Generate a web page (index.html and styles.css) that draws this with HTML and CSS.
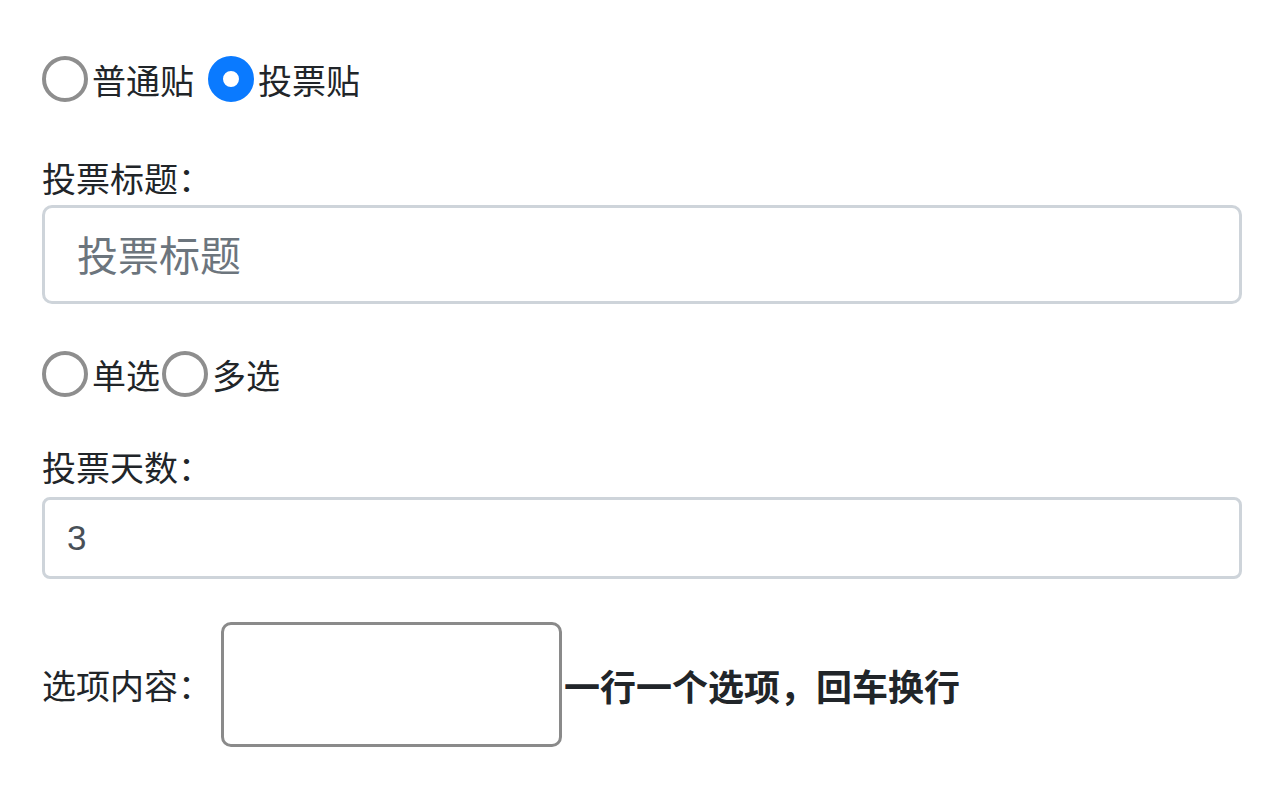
FILE: index.html
```html
<!DOCTYPE html>
<html lang="zh-CN">
<head>
    <meta charset="UTF-8">
    <meta name="viewport" content="width=device-width, initial-scale=1.0">
    <title>发帖</title>
    <link rel="stylesheet" href="styles.css">
</head>
<body>

<form class="post-form">
    <!-- 帖子类型 -->
    <div class="radio-row type-row">
        <label class="radio"><input type="radio" name="type" value="normal">普通贴</label>
        <label class="radio"><input type="radio" name="type" value="vote" checked>投票贴</label>
    </div>

    <!-- 投票标题 -->
    <label class="field-label" for="voteTitle">投票标题：</label>
    <input class="text-input input-lg" type="text" id="voteTitle" placeholder="投票标题">

    <!-- 单选 / 多选 -->
    <div class="radio-row mode-row">
        <label class="radio tight"><input type="radio" name="mode" value="single">单选</label>
        <label class="radio tight"><input type="radio" name="mode" value="multi">多选</label>
    </div>

    <!-- 投票天数 -->
    <label class="field-label days-label" for="voteDays">投票天数：</label>
    <input class="text-input" type="number" id="voteDays" value="3">

    <!-- 选项内容 -->
    <div class="options-row">
        <label class="field-label" for="voteOptions">选项内容：</label>
        <textarea id="voteOptions" class="options-box"></textarea>
        <b class="hint">一行一个选项，回车换行</b>
    </div>
</form>

</body>
</html>
```

FILE: styles.css
```css
body {
    margin: 0;
    font-family: "Noto Sans CJK SC", "Noto Sans", sans-serif;
    color: #212529;
    background-color: #fff;
}
.post-form {
    padding: 55px 42px 0 42px;
}
.radio-row {
    display: flex;
    align-items: center;
    height: 48px;
    font-size: 34px;
}
.radio {
    display: flex;
    align-items: center;
    margin-right: 14px;
}
.radio.tight {
    margin-right: 2px;
}
.radio input {
    appearance: none;
    -webkit-appearance: none;
    width: 46px;
    height: 46px;
    margin: 0 4px 0 0;
    border: 4px solid #8e8e8e;
    border-radius: 50%;
    background-color: #fff;
    box-sizing: border-box;
}
.radio input:checked {
    border: 15px solid #0a7aff;
    background-color: #fff;
}
.field-label {
    display: block;
    font-size: 34px;
    line-height: 48px;
    margin-top: 51px;
    margin-bottom: 3px;
}
.text-input {
    display: block;
    width: 100%;
    box-sizing: border-box;
    height: 82px;
    padding: 0 22px;
    font-family: "Liberation Sans", "Noto Sans CJK SC", sans-serif;
    font-size: 35px;
    color: #495057;
    border: 3px solid #ced4da;
    border-radius: 8px;
    background-color: #fff;
}
.input-lg {
    height: 99px;
    padding: 5px 32px 0 32px;
    font-size: 41px;
    border-radius: 10px;
}
.text-input::placeholder {
    color: #6c757d;
}
.mode-row {
    margin-top: 46px;
}
.days-label {
    margin-top: 45px;
    margin-bottom: 6px;
}
.options-row {
    display: flex;
    align-items: center;
    margin-top: 43px;
}
.options-row .field-label {
    margin: 0 9px 0 0;
}
.options-box {
    width: 341px;
    height: 125px;
    box-sizing: border-box;
    border: 3px solid #8a8a8a;
    border-radius: 10px;
    resize: none;
    margin: 0 2px 0 0;
}
.hint {
    font-size: 36px;
    font-weight: bold;
}
```
